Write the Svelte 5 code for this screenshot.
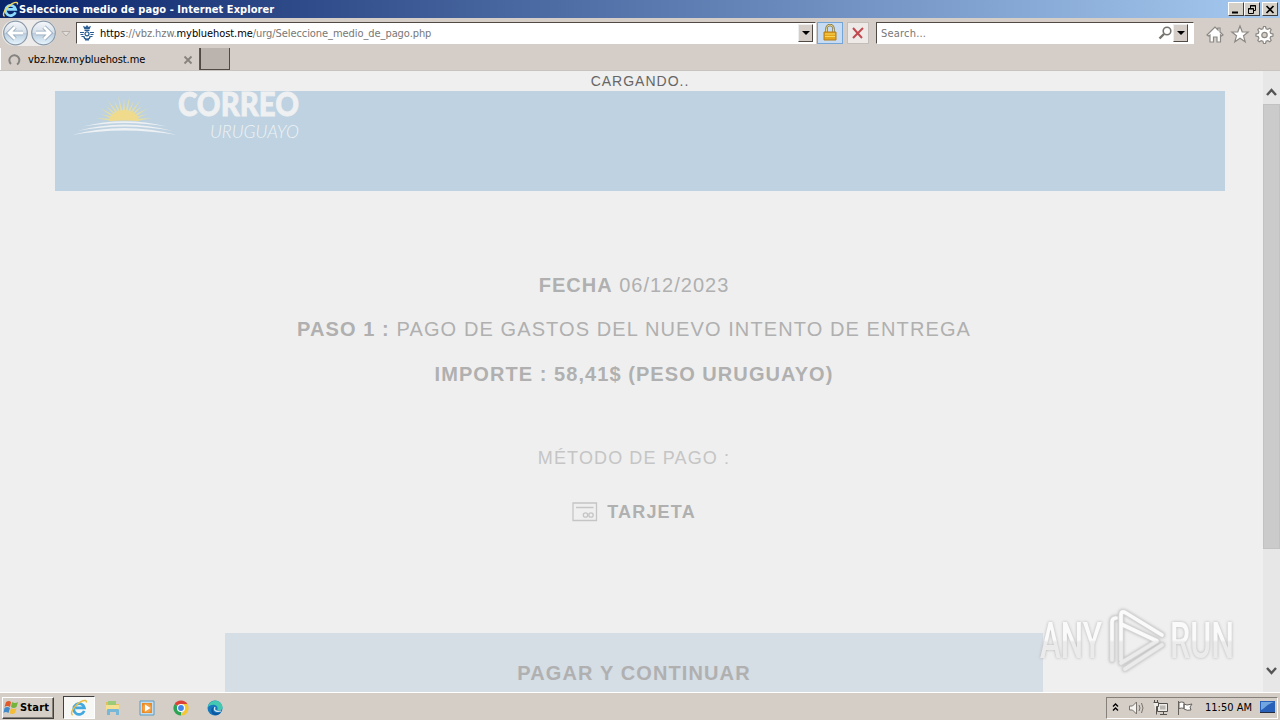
<script lang="ts">
  const title = 'Seleccione medio de pago';
  const tabTitle = 'vbz.hzw.mybluehost.me';
  const rays = Array.from({ length: 15 }, (_, i) => 6 + i * 12);

  // long and short rays alternate around the half sun
  function ray(deg: number, i: number) {
    const a = (deg * Math.PI) / 180;
    const len = i % 2 ? 24.5 : 28;
    const c = Math.cos(a);
    const s = Math.sin(a);
    const w = 1.2;
    return `${69 + 11 * c - w * s},${30 - 9 * s - w * c} ${69 + len * c},${30 - len * 0.92 * s} ${69 + 11 * c + w * s},${30 - 9 * s + w * c}`;
  }
</script>

<div class="screen">
  <header class="titlebar">
    <svg class="ie" width="17" height="17" viewBox="0 0 20 20">
      <path d="M15.8 13.2A6 6 0 1 1 16 9.8H6" fill="none" stroke="#8edcff" stroke-width="3.2" />
      <path d="M3 18C-1 16 5 7 12 3c4-2 7-2 6 1" fill="none" stroke="#f4d85b" stroke-width="1.7" />
    </svg>
    <span class="window-title">{title} - Internet Explorer</span>
    <div class="window-buttons">
      <button aria-label="Minimize"><svg width="14" height="11"><path d="M3 8.5h6" stroke="#000" stroke-width="2" /></svg></button>
      <button aria-label="Restore"><svg width="14" height="11"><path d="M5.5 4V1.5h5v5H9M5 2h6M3.5 4.5h5v5h-5zM3 5h6" fill="none" stroke="#000" /></svg></button>
      <button class="close" aria-label="Close"><svg width="14" height="11"><path d="M3.5 2l7 7M10.5 2l-7 7" stroke="#000" stroke-width="1.7" /></svg></button>
    </div>
  </header>

  <nav class="toolbar">
    <svg class="history" width="76" height="30" viewBox="0 0 76 30">
      <defs>
        <linearGradient id="orb" x2="0" y2="1">
          <stop offset="0" stop-color="#f5f8fb" /><stop offset=".48" stop-color="#d5dfe9" />
          <stop offset=".5" stop-color="#b9cbdc" /><stop offset="1" stop-color="#e7f6ff" />
        </linearGradient>
      </defs>
      <path d="M15 2h28a13 13 0 0 1 0 26H15a13 13 0 0 1 0-26" fill="#eeecea" />
      {#each [15.5, 43.5] as cx}
        <circle {cx} cy="15" r="11.8" fill="url(#orb)" stroke="#8b9aaa" stroke-width="1.2" />
      {/each}
      <path d="M23 15H9M15 9l-6 6 6 6M36 15h14M44 9l6 6-6 6" fill="none" stroke="#91a6bb" stroke-width="4.4" />
      <path d="M23 15H9M15 9l-6 6 6 6M36 15h14M44 9l6 6-6 6" fill="none" stroke="#fff" stroke-width="2.8" />
      <path d="M62 13.500h8l-4 4.500z" fill="#e4dfda" stroke="#aaa49e" stroke-width=".8" />
    </svg>
    <div class="address">
      <svg class="favicon" width="16" height="16" viewBox="0 0 16 16" fill="none" stroke="#285c93" stroke-width="1.2">
        <path d="M6 4L5 2l2 .5L8 1l1 1.500L11 2l-1 2zM5.500 5.500h5" fill="#285c93" />
        <circle cx="8" cy="8.800" r="2" /><path d="M1 7.500h4M11 7.500h4M1.500 9.500h3M11.500 9.500h3M2.500 11.500H5c0 3.500 6 3.500 6 0h2.500M6 15h4" />
      </svg>
      <span class="url"><b>https</b>://vbz.hzw.<b>mybluehost.me</b>/urg/Seleccione_medio_de_pago.php</span>
      <button class="drop" aria-label="Address list"><i></i></button>
    </div>
    <button class="lock" aria-label="Security report">
      <svg width="16" height="18" viewBox="0 0 16 18">
        <path d="M4.5 8V4.5a3.5 3.5 0 0 1 7 0V8" fill="none" stroke="#807244" stroke-width="2.4" />
        <path d="M4.5 8V4.5a3.5 3.5 0 0 1 7 0V8" fill="none" stroke="#e8d68b" />
        <path d="M2 8h12v8H2z" fill="#e4a51d" stroke="#b47d18" /><path d="M3 10h10M3 12.5h10" stroke="#f6d65c" />
      </svg>
    </button>
    <button class="stop" aria-label="Stop">
      <svg width="14" height="14"><path d="M2 2l9 10M12 2L2 12" stroke="#c14a51" stroke-width="2" /></svg>
    </button>
    <div class="search">
      <span>Search...</span>
      <svg width="15" height="16" fill="none" stroke="#77736f"><circle cx="9" cy="6" r="3.8" stroke-width="1.6" /><path d="M6 9l-4.5 4.5" stroke-width="2.4" /></svg>
      <button class="drop" aria-label="Search options"><i></i></button>
    </div>
    <svg class="commands" width="72" height="20" viewBox="0 0 72 20" fill="#fff" stroke="#8c8883" stroke-width="1.2">
      <path d="M2 11L10 3l3 3V4h2v4l3 3-1.5 1-1-1v7H12v-5H8.500v5H5v-7l-1.500 1z" />
      <path d="M35 2l2.200 5.800 6 .2-4.700 3.800 1.700 6-5.200-3.500-5.200 3.500 1.700-6L26.800 8l6-.2z" />
      <path d="M58.500 2.500h2l.6 2.200 1.700.7 2-1.100 1.400 1.400-1.100 2 .7 1.700 2.200.6v2l-2.200.6-.7 1.700 1.100 2-1.400 1.400-2-1.100-1.700.7-.6 2.200h-2l-.6-2.200-1.700-.7-2 1.100-1.400-1.400 1.100-2-.7-1.700-2.200-.6v-2l2.200-.6.7-1.700-1.100-2 1.400-1.400 2 1.100 1.700-.7z" />
      <circle cx="59.500" cy="11" r="2.700" fill="#d4d0c8" />
    </svg>
  </nav>

  <div class="tabs">
    <div class="tab">
      <svg width="14" height="14"><path d="M3 11A5 5 0 1 1 9 11.5" fill="none" stroke="#858380" stroke-width="2" /></svg>
      <span>{tabTitle}</span>
      <svg width="10" height="10"><path d="M1.5 1.5l7 7M8.5 1.5l-7 7" stroke="#87827e" stroke-width="1.8" /></svg>
    </div>
    <div class="new-tab"></div>
  </div>

  <div class="viewport">
    <main>
      <p class="loading">CARGANDO..</p>
      <div class="banner">
        <svg class="logo" width="250" height="60" viewBox="0 0 250 60">
          <g fill="#e3dda6">
            {#each rays as deg, i}<polygon points={ray(deg, i)} />{/each}
            <path d="M54 31a15 12 0 0 1 30 0z" fill="#f0db8d" />
          </g>
          <path d="M30 34Q69 25 110 34V50H30z" fill="#bed2e1" />
          <g fill="#edf1f3">
            <path d="M28 35.500Q69 25 112 35.500Q69 28.500 28 35.500z" /><path d="M22 40Q69 27 118 40Q69 31 22 40z" /><path d="M17 44Q69 30 122 44Q69 35 17 44z" />
          </g>
          <text class="brand" x="123" y="25" textLength="121" lengthAdjust="spacingAndGlyphs">CORREO</text>
          <text class="country" x="155" y="47" textLength="89" lengthAdjust="spacingAndGlyphs">URUGUAYO</text>
        </svg>
      </div>
      <section class="payment">
        <p class="date"><b>FECHA</b> 06/12/2023</p>
        <p class="step"><b>PASO 1 :</b> PAGO DE GASTOS DEL NUEVO INTENTO DE ENTREGA</p>
        <p class="amount"><b>IMPORTE : 58,41$ (PESO URUGUAYO)</b></p>
        <p class="method">MÉTODO DE PAGO :</p>
        <div class="card-option">
          <svg width="26" height="20" fill="none" stroke="#c5c5c5" stroke-width="1.3">
            <path d="M1 1h23.500v17.500H1zM4 5.500h17.500" /><circle cx="13.500" cy="13" r="2.200" /><circle cx="19" cy="13" r="2.200" />
          </svg>
          <b>TARJETA</b>
        </div>
        <div class="pay">PAGAR Y CONTINUAR</div>
      </section>
      <svg class="watermark" width="204" height="70" viewBox="0 0 204 70">
        <defs>
          <linearGradient id="shine" gradientUnits="userSpaceOnUse" x1="0" y1="0" x2="0" y2="70">
            <stop offset=".47" stop-color="#fafafa" /><stop offset=".5" stop-color="#ebebeb" />
          </linearGradient>
        </defs>
        <text x="5" y="51" textLength="62" lengthAdjust="spacingAndGlyphs">ANY</text>
        <text x="135" y="51" textLength="64" lengthAdjust="spacingAndGlyphs">RUN</text>
        <g fill="none" stroke-linecap="round" stroke-linejoin="round">
          <path d="M77 53V15q0-4 4-4M86 43V8q0-5 5-2l36 22M90 62l37-24M86 53V17l36 17-36 22" stroke="#d6d6d6" stroke-width="5.5" />
          <path d="M77 53V15q0-4 4-4M86 43V8q0-5 5-2l36 22M90 62l37-24M86 53V17l36 17-36 22" stroke="url(#shine)" stroke-width="3.6" />
        </g>
      </svg>
    </main>
    <div class="scrollbar">
      <svg width="17" height="33"><path d="M4 24l4.5-5L13 24" fill="none" stroke="#555" stroke-width="2.4" /></svg>
      <div class="thumb"></div>
      <svg class="down" width="17" height="32"><path d="M4 8l4.5 5L13 8" fill="none" stroke="#555" stroke-width="2.4" /></svg>
    </div>
  </div>

  <footer class="taskbar">
    <button class="start">
      <svg width="17" height="17" viewBox="0 0 17 17">
        <path d="M3 3q3-2 5 0L7 8Q4 6 1.500 8z" fill="#e15a2b" /><path d="M9 3q3 2 6 0l-1.500 5q-3 2-5.500 0z" fill="#75b43c" />
        <path d="M1.500 9Q4 7 7 9l-1.500 5q-3-2-5 0z" fill="#4289ca" /><path d="M8 9q3 2 5.500 0L12 14q-3 2-5.500 0z" fill="#f5bd35" />
      </svg>
      Start
    </button>
    <div class="launch">
      <div class="running">
        <svg width="18" height="18" viewBox="0 0 20 20">
          <path d="M15.8 13.2A6 6 0 1 1 16 9.8H6" fill="none" stroke="#42a8df" stroke-width="3" />
          <path d="M3 18C-1 16 5 7 12 3c4-2 7-2 6 1" fill="none" stroke="#e8bd46" stroke-width="1.6" />
        </svg>
      </div>
      <svg width="18" height="18"><path d="M2 3h6l2 2h5v5H2z" fill="#e3bf5b" /><path d="M4 2h8v5H4z" fill="#9bcb79" /><path d="M2 6h13v5H2z" fill="#f5df91" /><path d="M3 16v-5q0-1 1-1h10q1 0 1 1v5h-3v-3H6v3z" fill="#77b7d8" /></svg>
      <svg width="18" height="18"><path d="M2 2h14v14H2z" fill="#c4dded" stroke="#5d9cc5" /><path d="M4 4h10v10H4z" fill="#e98a25" /><circle cx="9" cy="9" r="4.500" fill="#f3a047" /><path d="M7 5.500l5.500 3.500L7 12.500z" fill="#fff" /></svg>
      <svg width="18" height="18" viewBox="0 0 18 18"><path d="M9 9L2.500 5.200A7.500 7.500 0 0 1 15.500 5.200z" fill="#de4035" /><path d="M9 9v7.500A7.500 7.500 0 0 1 2.500 5.200z" fill="#2ea354" /><path d="M9 5h6.400A7.500 7.500 0 0 1 9 16.500L12.500 11z" fill="#f5c62d" /><circle cx="9" cy="9" r="3.500" fill="#4384e8" stroke="#fff" stroke-width="1.2" /></svg>
      <svg width="18" height="18"><circle cx="9" cy="9" r="7.500" fill="#1778bd" /><path d="M2 8C3-1 17 0 16.500 9c0 3-6 3-5 1 1-4-5-6-9.500-2" fill="#43c8b1" /><path d="M8 8c-4 5 3 8 7 5-5 7-12 1-9-4z" fill="#0c579f" /><path d="M9 8c-2 4 2 5 6 4" fill="none" stroke="#d4e7ed" stroke-width="1.2" /></svg>
    </div>
    <div class="tray">
      <svg width="12" height="18" fill="none" stroke="#000" stroke-width="1.4"><path d="M3 7.500L5.500 5 8 7.500M3 11.500L5.500 9 8 11.500" /></svg>
      <svg width="18" height="18" fill="#f5f3f0" stroke="#77736e"><path d="M1.500 7h3l4-4v12l-4-4h-3z" /><path d="M11 6q2 3 0 6M13.500 4q3 5 0 10" fill="none" /></svg>
      <svg width="18" height="18" fill="#eeece8" stroke="#55514d"><path d="M5.500 4.500h10v8h-10zM8 15.500h7M11.500 13v3" /><path d="M1.500 3.500h5v4h-2v8M2.500 1v3M5.500 1v3" /><path d="M8 6.500h5.500v4H8z" fill="#b9b6b1" stroke="none" /></svg>
      <svg width="18" height="18" fill="#fff" stroke="#66625d"><path d="M2.500 2v14M3 3.500q3-1 5 0v6q-2-1-5 0zM8 5q2 2 8 0l-2 3 1 3q-4 1-7-1z" /></svg>
      <time>11:50 AM</time>
      <svg width="17" height="17"><path d="M0 2h15v11H0z" fill="#2861b7" /><path d="M1 3h13Q7 5 3 10l-2 1z" fill="#71a7e0" /><path d="M0 13h15v1H0z" fill="#222d44" /></svg>
    </div>
  </footer>
</div>

<style>
  :global(body) {
    margin: 0;
    overflow: hidden;
  }
  .screen {
    width: 1280px;
    height: 720px;
    display: flex;
    flex-direction: column;
    background: #d4d0c8;
    font: 11px 'DejaVu Sans Condensed', 'DejaVu Sans', sans-serif;
    font-stretch: condensed;
    color: #000;
  }
  .screen * {
    box-sizing: border-box;
  }
  svg {
    display: block;
    flex: none;
  }
  button {
    padding: 0;
    font: inherit;
    border-radius: 0;
  }
  .titlebar {
    height: 18px;
    display: flex;
    align-items: center;
    padding: 0 2px;
    background: linear-gradient(90deg, #0a246a, #a6caf0);
    color: #fff;
  }
  .window-title {
    flex: 1;
    font-weight: bold;
    letter-spacing: 0.06px;
    white-space: nowrap;
  }
  .window-buttons {
    display: flex;
  }
  .window-buttons button {
    width: 16px;
    height: 14px;
    overflow: hidden;
    background: #d4d0c8;
    border: 1px solid;
    border-color: #fff #404040 #404040 #fff;
  }
  .window-buttons .close {
    margin-left: 2px;
  }
  .toolbar {
    height: 30px;
    display: flex;
    align-items: center;
    background: #d5cec8;
  }
  .address, .search {
    height: 22px;
    display: flex;
    align-items: center;
    background: #fff;
    border: 1px solid;
    border-color: #514944 #fff #fff #514944;
    color: #777;
  }
  .address {
    width: 740px;
    padding: 0 2px;
  }
  .favicon {
    margin-right: 5px;
  }
  .url {
    flex: 1;
    padding-top: 1px;
    letter-spacing: -0.07px;
  }
  .url b {
    color: #000;
    font-weight: normal;
  }
  .drop {
    width: 15px;
    height: 18px;
    display: flex;
    align-items: center;
    justify-content: center;
    background: #d5cec8;
    border: 1px solid;
    border-color: #eee #514944 #514944 #eee;
  }
  .drop i {
    border: 4px solid transparent;
    border-top-color: #000;
    border-bottom: 0;
  }
  .lock {
    width: 26px;
    height: 22px;
    margin-left: 1px;
    display: grid;
    place-items: center;
    background: #c7dcf3;
    border: 1px solid #75a4d6;
  }
  .stop {
    width: 22px;
    height: 22px;
    margin: 0 7px 0 4px;
    display: grid;
    place-items: center;
    background: #eeeae8;
    border: 1px solid #c4beba;
  }
  .search {
    width: 318px;
    padding: 0 4px;
  }
  .search span {
    flex: 1;
    padding-top: 1px;
    letter-spacing: 0.2px;
  }
  .search .drop {
    margin-right: 1px;
  }
  .commands {
    margin-left: 11px;
    margin-top: 2px;
  }
  .tabs {
    height: 23px;
    display: flex;
    background: #d5cec8;
    border-bottom: 1px solid #c8c4bf;
  }
  .tab {
    width: 200px;
    display: flex;
    align-items: center;
    padding: 1px 6px 0 7px;
    border-right: 1px solid #5d5752;
    border-left: 1px solid #fff;
  }
  .tab span {
    flex: 1;
    margin-left: 6px;
    letter-spacing: -0.1px;
  }
  .new-tab {
    width: 30px;
    height: 22px;
    background: #bab3ae;
    border: 1px solid #4f4843;
    border-top: 0;
  }
  .viewport {
    flex: 1;
    min-height: 0;
    display: flex;
    background: #efefef;
  }
  main {
    position: relative;
    flex: 1;
    min-width: 0;
    overflow: hidden;
    font-family: 'Liberation Sans', Arial, sans-serif;
    font-stretch: normal;
    color: #b0b0b0;
  }
  p {
    margin: 0;
  }
  .loading {
    height: 20px;
    padding-left: 17px;
    text-align: center;
    font-size: 14px;
    line-height: 21px;
    letter-spacing: 1px;
    color: #666;
  }
  .banner {
    width: 1170px;
    height: 100px;
    margin-left: 55px;
    background: #bed2e1;
  }
  .logo {
    overflow: visible;
  }
  .brand {
    font: 900 32px Lato, sans-serif;
    fill: #eff0f1;
    stroke: #eff0f1;
    stroke-width: 0.8;
  }
  .country {
    font: italic 300 17px Lato, sans-serif;
    fill: #eff2f4;
  }
  .payment {
    width: 818px;
    margin: 82px 0 0 225px;
    display: flex;
    flex-direction: column;
    text-align: center;
    font-size: 20px;
    line-height: 24px;
    letter-spacing: 1.06px;
    white-space: nowrap;
  }
  .payment p {
    margin-bottom: 20px;
  }
  .payment .date {
    letter-spacing: 1px;
  }
  .payment .step {
    margin-bottom: 21px;
    letter-spacing: 1.1px;
  }
  .payment .amount {
    margin-bottom: 60px;
  }
  .payment .method {
    margin-bottom: 30px;
    font-size: 18px;
    letter-spacing: 1.12px;
    color: #c5c5c5;
  }
  .card-option {
    height: 24px;
    display: flex;
    align-items: center;
    justify-content: center;
    gap: 9px;
    font-size: 18px;
    letter-spacing: 1.2px;
  }
  .pay {
    height: 80px;
    margin-top: 109px;
    line-height: 80px;
    letter-spacing: 1.12px;
    background: #d5dde5;
    font-weight: bold;
  }
  .watermark {
    position: absolute;
    left: 1035px;
    top: 536px;
    overflow: visible;
    filter: drop-shadow(0 0 1.5px #b4b4b4);
  }
  .watermark text {
    font: 500 50px Roboto, sans-serif;
    fill: url(#shine);
  }
  .scrollbar {
    width: 17px;
    display: flex;
    flex-direction: column;
    background: #e7e7e7;
  }
  .thumb {
    height: 445px;
    background: #cbcbcb;
    border: 1px solid #c2c2c2;
  }
  .down {
    margin-top: auto;
  }
  .taskbar {
    height: 28px;
    display: flex;
    align-items: center;
    padding: 3px 2px 1px;
    background: #d4cec6;
    border-top: 1px solid #fff;
  }
  .start {
    width: 52px;
    height: 22px;
    display: flex;
    align-items: center;
    background: #d4cec6;
    border: 1px solid;
    border-color: #fff #404040 #404040 #fff;
    box-shadow: inset -1px -1px #858079;
    font-weight: bold;
    letter-spacing: 0.2px;
  }
  .launch {
    display: flex;
    align-items: center;
    gap: 16px;
    margin-left: 9px;
  }
  .running {
    width: 32px;
    height: 23px;
    margin-right: -7px;
    display: grid;
    place-items: center;
    background: #f7f7f5;
    border: 1px solid;
    border-color: #404040 #fff #fff #404040;
  }
  .tray {
    width: 172px;
    height: 22px;
    margin-left: auto;
    display: flex;
    align-items: center;
    padding-left: 3px;
    border: 1px solid;
    border-color: #858079 #fff #fff #858079;
  }
  .tray svg + svg {
    margin-left: 6px;
  }
  .tray time {
    flex: 1;
    padding-left: 3px;
    text-align: center;
    white-space: nowrap;
  }
</style>
